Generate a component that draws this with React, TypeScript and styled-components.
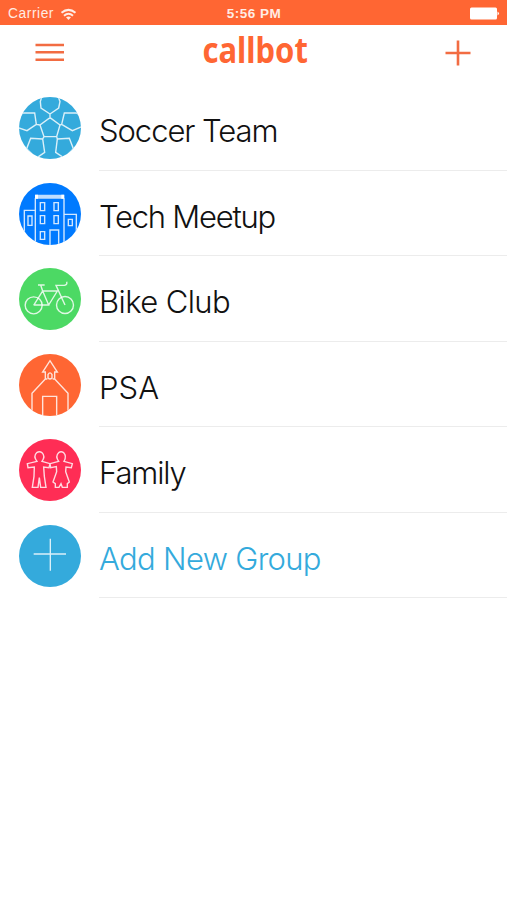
import React from 'react';
import styled, { createGlobalStyle } from 'styled-components';

const ORANGE = '#ff6633';

const GlobalStyle = createGlobalStyle`
  * { box-sizing: border-box; }
  body { margin: 0; background: #fff; font-family: Inter, "Liberation Sans", sans-serif; }
`;

const Screen = styled.main`
  width: 100%;
  min-height: 900px;
  background: #fff;
  overflow: hidden;
`;

const StatusBar = styled.div`
  display: grid;
  grid-template-columns: 1fr auto 1fr;
  align-items: center;
  height: 25px;
  padding: 3px 7px 0 8px;
  background: ${ORANGE};
  color: #ffece4;
  font: 13.8px/20px "Liberation Sans", Arial, sans-serif;
`;

const Carrier = styled.div`
  display: flex;
  align-items: center;
  gap: 6px;
  letter-spacing: 0.55px;
`;

const Clock = styled.time`
  font-weight: 700;
  font-size: 13.5px;
  letter-spacing: 0.5px;
`;

const Battery = styled.svg`
  justify-self: end;
  display: block;
  width: 31px;
  height: 13px;
  margin-top: -2px;
`;

const NavBar = styled.header`
  display: grid;
  grid-template-columns: 1fr auto 1fr;
  align-items: center;
  height: 60px;
  padding: 0 36px 5px 35px;
`;

const NavButton = styled.button<{ $end?: boolean }>`
  justify-self: ${(p) => (p.$end ? 'end' : 'start')};
  display: block;
  padding: 0;
  border: 0;
  background: none;
  color: #f26c42;
  svg { display: block; }
`;

const Logo = styled.h1`
  display: flex;
  justify-content: center;
  width: 110px;
  margin: 0;
  color: ${ORANGE};
  font: 700 36px/50px "Noto Sans", sans-serif;
  span { display: block; transform: translate(2px, -3px) scaleX(0.86); }
`;

const GroupList = styled.ul`
  margin: 0;
  padding: 0 0 0 19px;
  list-style: none;
`;

const GroupRow = styled.li`
  display: flex;
  gap: 18px;
  height: 85.55px;
`;

const Badge = styled.div<{ $color: string }>`
  flex: none;
  width: 62px;
  height: 62px;
  margin-top: 12px;
  border-radius: 50%;
  overflow: hidden;
  background: ${(p) => p.$color};
  svg {
    display: block;
    width: 62px;
    height: 62px;
    fill: none;
    stroke: #fff;
    stroke-opacity: 0.82;
    stroke-width: 4.2;
  }
`;

const GroupName = styled.div<{ $accent?: boolean; $spacing: number }>`
  flex: 1;
  padding-top: 26px;
  border-bottom: 1px solid #ececec;
  color: ${(p) => (p.$accent ? '#34aadc' : '#111')};
  font-size: 31px;
  font-weight: 300;
  line-height: 40px;
  letter-spacing: ${(p) => p.$spacing}px;
  white-space: nowrap;
`;

const Soccer = () => (
  <svg viewBox="27 21 186 186">
    <path d="M120 83 150 105 140 140H102L90 105ZM120 83V72M120 72 93 54 91 35 97 15H143L150 35 146 54ZM90 105 79 103M79 103 74 69 38 69 20 80V112L51 122ZM150 105 155 103M155 103 163 69 199 69 220 80V108L187 122ZM102 140 98 147M98 147 62 145 50 176 78 205 104 187ZM140 140 142 147M142 147 178 145 190 176 164 205 137 187Z" />
  </svg>
);

const Building = () => (
  <svg viewBox="27 18 186 186">
    <path d="M76 207V64M162 207V64M76 100H43V207M162 112H199V207M120 207V159H146V207M91 77H104V101H91ZM132 77H145V101H132ZM91 116H104V140H91ZM132 116H145V140H132ZM91 164H104V187H91ZM54 117H66V145H54ZM175 127H187V146H175Z" />
    <path d="M76 53H162V65H76Z" fill="#fff" fillOpacity=".75" stroke="none" />
    <path d="M75 53H84V65H75ZM154 53H163V65H154Z" fill="#fff" stroke="none" />
  </svg>
);

const Bike = () => (
  <svg viewBox="27 18 186 186">
    <circle cx="71" cy="130" r="25.5" />
    <circle cx="165" cy="129" r="25.5" />
    <path d="M71 130 98 87 116 129H71M98 87H142L116 129M98 87 92 69M84 69H104M165 129 138 70H163Q173 68 170 59" />
  </svg>
);

const Church = () => (
  <svg viewBox="27 16 186 186">
    <path d="M66 205V134L106 91V70H98L120 36 142 70H134V91L174 134V205M98 205V143H140V205M106 91H112M134 91H128M114 88V78Q120 67 126 78V88Q120 94 114 88Z" />
  </svg>
);

const Family = () => (
  <svg viewBox="27 15 186 186">
    <path d="M81 82Q69 66 80 56 88 51 96 56 107 66 96 82L120 89 117 101 101 99 103 127 108 160H92L88 131 84 160H67L72 127 73 99 54 101 52 89ZM146 82Q135 66 146 56 153 51 161 56 171 66 162 82L187 89 184 101 168 99 167 113 178 144 172 149V160H157L153 149 147 160H136V149L129 144 140 113 139 98 122 101 120 89Z" />
  </svg>
);

const Plus = () => (
  <svg viewBox="27 20 186 186">
    <path d="M71 107H168M121 61V157" />
  </svg>
);

const groups = [
  { name: 'Soccer Team', color: '#34aadc', Icon: Soccer, spacing: -1.05 },
  { name: 'Tech Meetup', color: '#007aff', Icon: Building, spacing: -1.25 },
  { name: 'Bike Club', color: '#4cd964', Icon: Bike, spacing: -0.6 },
  { name: 'PSA', color: ORANGE, Icon: Church, spacing: 0.1 },
  { name: 'Family', color: '#ff2d55', Icon: Family, spacing: -1.15 },
  { name: 'Add New Group', color: '#34aadc', Icon: Plus, spacing: -0.68, accent: true },
];

export default function App() {
  return (
    <Screen>
      <GlobalStyle />
      <StatusBar>
        <Carrier>
          Carrier
          <svg width="17" height="13" viewBox="0 0 17 13" fill="none" stroke="currentColor" strokeWidth="2">
            <path d="M1.5 4.8Q8.5-1 15.5 4.8M4 7.8Q8.5 3.8 13 7.8" />
            <path d="M6 9.3Q8.5 7.5 11 9.3L8.5 12Z" fill="currentColor" stroke="none" />
          </svg>
        </Carrier>
        <Clock>5:56 PM</Clock>
        <Battery viewBox="0 0 31 13" fill="#fff">
          <rect x="1" y=".5" width="27" height="12" rx="1.5" />
          <path d="M28.5 4.5Q31.5 6.5 28.5 8.5Z" />
        </Battery>
      </StatusBar>
      <NavBar>
        <NavButton aria-label="Menu">
          <svg width="29" height="19" viewBox="0 0 29 19" stroke="currentColor" strokeWidth="2.6">
            <path d="M.5 2H29M.5 9.3H29M.5 16.8H29" />
          </svg>
        </NavButton>
        <Logo><span>callbot</span></Logo>
        <NavButton $end aria-label="Add group">
          <svg width="26" height="26" viewBox="0 0 26 26" stroke="currentColor" strokeWidth="2.6">
            <path d="M.5 13H25.5M13 .5V25.5" />
          </svg>
        </NavButton>
      </NavBar>
      <GroupList>
        {groups.map(({ name, color, Icon, spacing, accent }) => (
          <GroupRow key={name}>
            <Badge $color={color}><Icon /></Badge>
            <GroupName $accent={accent} $spacing={spacing}>{name}</GroupName>
          </GroupRow>
        ))}
      </GroupList>
    </Screen>
  );
}
